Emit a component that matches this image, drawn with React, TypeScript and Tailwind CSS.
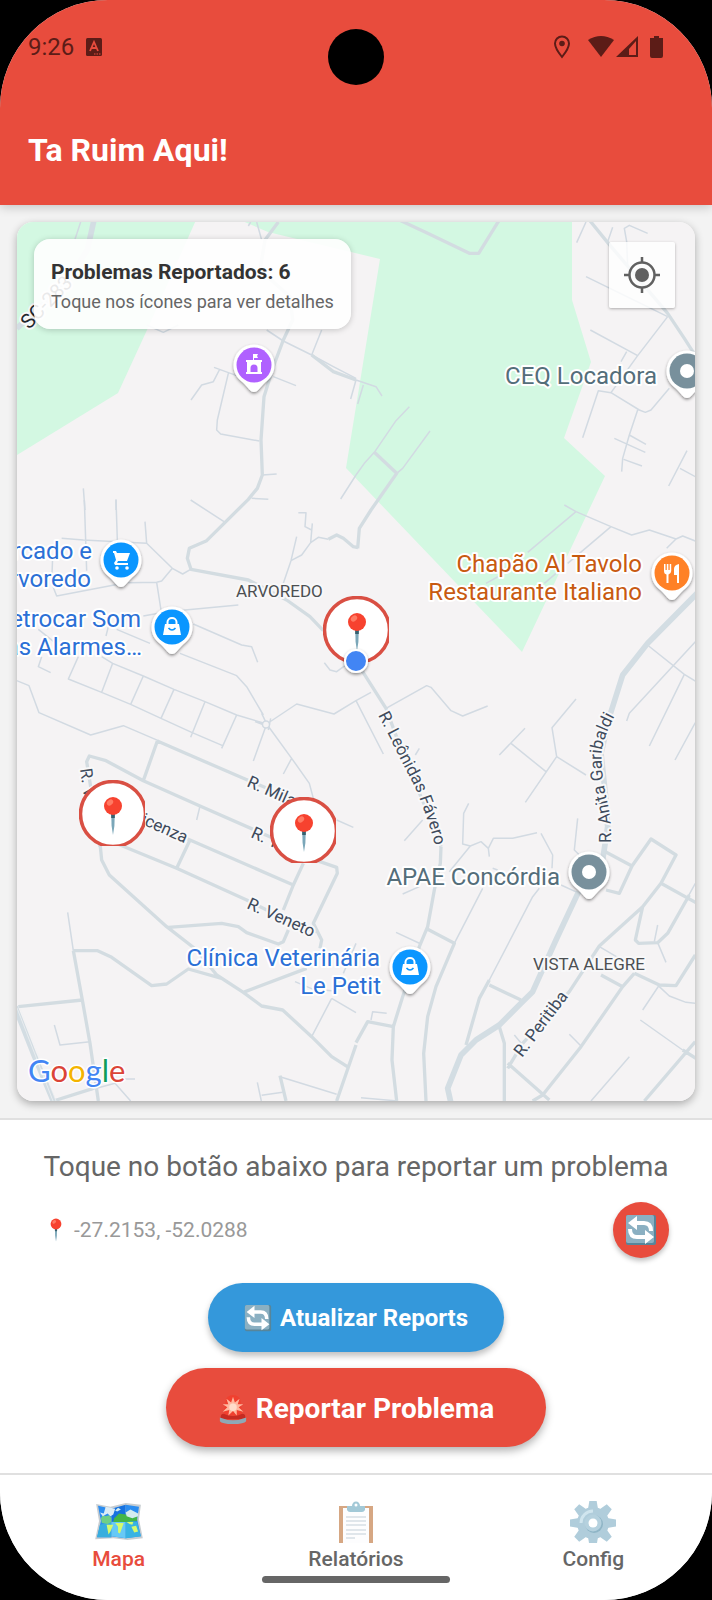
import type { ReactNode } from 'react';

type Tile = { x: number; y: number; minor: string; street: string; major?: string };

// Road geometry, split in tiles. Inside a tile 3 units are 1 map unit.
const tiles: Tile[] = [
  {
    x: 0,
    y: 210,
    minor:
      'M242 36L225 88M745 48L752 36M770 36L785 90M440 345L490 367L535 345M800 360L850 393L935 435L1000 470L1068 505M935 435L965 360M1068 510L1052 567M820 500L888 527M642 472L710 497M658 480L640 515L605 525L573 570M685 490L652 630L650 660L662 672L778 693M787 795L830 792M755 865L805 868M572 870L672 935M250 835L255 900M348 868V900M1022 867L1068 795',
    street: 'M835 36L795 90L780 180L870 260L878 330L850 390L820 470L792 560L783 690L787 795L772 835L745 868L620 992L568 1015L562 1045L573 1078L745 1110L860 1170L930 1220L970 1262M935 435L1000 485L1068 510',
    major: 'M282 30L262 120L190 230L50 355',
  },
  {
    x: 356,
    y: 210,
    minor:
      'M0 510L60 530L78 558M22 525L5 582M160 590L120 632L55 727L25 760L0 795M222 663L140 775L122 790M690 200L935 320M703 360L845 437M812 425L795 455M935 320L845 437L765 548M680 683L727 542L765 548L850 600L868 607L885 600L940 535M845 600L820 675L800 745L797 785M820 675L870 703M775 685L868 727M803 748L858 768M993 722L938 828M972 775L1018 800M690 36L662 98M770 52L755 95M875 70L820 46L805 55L812 95L815 170',
    street: 'M130 30L215 70L340 130H368L428 33M55 727L122 790L45 900L10 955L5 1015M700 30L757 100L935 310L985 385L1020 440',
  },
  {
    x: 0,
    y: 500,
    minor:
      'M253 0L260 212M348 0L352 120M185 115L250 120L440 130M435 65L440 130L517 205L548 222L572 208M517 205L485 243L470 247L385 248M158 170L155 250L170 288L370 250M470 247L483 330M430 348L500 335L715 315M895 38H918L915 80L935 90M937 70L932 128L905 165L873 182M890 110L873 182L850 250M932 128L955 112L985 118M350 388L450 430M540 460L710 527L740 560L790 645M580 372L725 435L755 440L773 487M115 388L165 428M325 380L318 408M125 470L115 500L152 518M235 470L205 537L305 577L392 613L483 655L575 697L668 737M305 470L338 490L430 528L522 568L615 605L710 645L800 672M338 490L305 577M430 528L392 613M522 568L483 655M615 605L572 712M710 645L665 745M50 542L87 557L117 638L272 705L370 677L475 722M800 672L890 612L1002 642L1068 602L1113 577M785 640L800 672L760 783M765 665L800 678M812 655L805 690M800 672L875 775L928 850L940 895M875 775L850 822M973 488L990 510L1010 515L1035 497',
    street: 'M985 118L1010 105L1030 115L1060 140L1074 143',
  },
  {
    x: 356,
    y: 500,
    minor:
      'M625 15L660 35L765 80L827 105L880 90L960 117L980 108L1018 123M960 117L932 145M660 35L515 157M765 80L635 190M435 225L390 250M600 220L565 250M878 438L985 523L1018 543M1018 425L820 640L812 663M985 523L880 738M1018 668L957 780M0 602L82 762M90 625L212 557L225 562L285 632L320 648L395 618M507 685L430 765M465 730L570 815M660 597L588 683L602 770L508 907M602 770L690 825M190 745L178 765',
    street: 'M20 515L90 625L140 760L235 985L255 1040',
    major: 'M1025 278L875 430L800 525L762 645L735 760L750 900L755 980L740 1080',
  },
  {
    x: 0,
    y: 740,
    minor:
      'M600 198L590 240M203 517L220 632M163 855L180 915L270 905M345 1030L392 1083M375 1017H405M270 1050L345 1030M1010 240L1060 262M885 725L940 748L995 752M995 775L935 890M995 775L1068 818M772 1027L784 1083M785 1066L848 1057M840 1010L1010 1063M1030 700L1068 610',
    street:
      'M300 320L272 140L260 65L268 48L318 62L430 122L600 198L820 295L960 365L1010 382L1012 400L940 550L965 600L960 625M472 3L430 122M472 3L730 115L850 165M400 225L570 300L880 435M570 300L530 385M910 370L880 435L850 510M865 570L850 605L835 612L740 578L715 560L665 550L505 562M300 290L530 385L740 480L860 540L950 575M300 310L305 360L328 405L500 560L590 630L650 705L730 757L785 798L848 810L935 890L995 950L1042 980M730 757L920 685M220 632L247 780L270 910L295 1083M220 632H293L335 652L455 737L500 732L565 687L665 715M55 800L247 780M160 1083L280 1045M840 1007L858 1083M1068 915L1010 1083',
    major: 'M45 800L100 940L160 1083',
  },
  {
    x: 356,
    y: 740,
    minor:
      'M120 577L195 612M380 445L295 610M410 385L425 390M45 840L50 815L92 820M15 1073L125 1083M140 462L190 440M145 302L200 240M338 190L323 220L320 312L343 318L375 305L397 325L412 295H470L543 278M397 325L400 350M343 318L280 395M555 280L590 345L588 385M665 235L655 330L670 345M550 445L530 470L400 720M615 435L670 460M730 620L790 655M905 555L895 605M905 608L930 667M910 735L860 810M910 740L940 768L990 787L1018 790M640 883L675 918M820 950L705 1083M853 840L980 930M475 885L500 915M1018 430L985 490',
    street:
      'M255 320L253 370L235 450L215 560L190 620L140 770L112 860L108 960L122 1083M215 568L295 610L240 740L215 830L203 940L210 1083M0 908L35 845L112 860M400 720L370 775L330 915M400 735L495 780M430 860L445 910V1083M748 335L828 378M750 450L790 460L828 378L885 297L960 345L915 430L860 500L730 618L640 755L500 910L455 985M915 430L1020 488M860 500L838 600L848 610L905 608L935 580L1000 465M735 705L800 740M835 700L800 740L675 920L560 1065L530 1083M835 700L910 735L960 737L1018 645M455 970L580 1080M980 930L1020 955M1018 905L865 1083',
    major: 'M668 455L600 600L530 755L495 790L430 855L360 900L315 945L275 1045L285 1090',
  },
];

const pinShape = 'M0 27C-4 27-6 22-11 17.500C-17 13-20.500 8-20.500 0A20.500 20.500 0 0 1 20.500 0C20.500 8 17 13 11 17.500C6 22 4 27 0 27Z';

function Pin({ x, y, color, children }: { x: number; y: number; color: string; children: ReactNode }) {
  return (
    <g transform={`translate(${x} ${y})`} fill="#fff">
      <path d={pinShape} filter="url(#pin-shadow)" />
      <circle r="17.500" fill={color} />
      {children}
    </g>
  );
}

function BagGlyph() {
  return (
    <>
      <path d="M-7 -3H7L9 8H-9Z" />
      <path d="M-4.500 -2V-5A4.500 4 0 0 1 4.500 -5V-2" fill="none" stroke="#fff" strokeWidth="2" />
      <path d="M-3.500 1Q0 5 3.500 1" fill="none" stroke="#0a96ff" strokeWidth="1.600" />
    </>
  );
}

function PushpinShape() {
  return (
    <>
      <path d="M-1.800 7H1.800L1.400 20L0 29L-1.400 20Z" fill="#7ba7b9" />
      <path d="M-1.800 7H1.800V12H-1.800Z" fill="#37606e" />
      <circle r="9" fill="#f7422f" />
      <ellipse cx="-3" cy="-3.500" rx="3.500" ry="2.600" fill="#ff7a63" transform="rotate(-40 -3 -3.500)" />
    </>
  );
}

function ReportMarker({ x, y }: { x: number; y: number }) {
  return (
    <g transform={`translate(${x} ${y})`}>
      <g clipPath="url(#marker-box)">
        <circle cx="34" cy="34" r="32.500" fill="#fff" stroke="#d94f43" strokeWidth="3.500" />
      </g>
      <g transform="translate(34 26)">
        <PushpinShape />
      </g>
    </g>
  );
}

function CityMap() {
  return (
    <svg
      viewBox="17 222 678 879"
      preserveAspectRatio="xMidYMid slice"
      className="block h-full w-full font-[Roboto,sans-serif]"
      role="img"
      aria-label="Mapa"
    >
      <defs>
        <filter id="pin-shadow" x="-30%" y="-30%" width="160%" height="170%">
          <feDropShadow dx="0" dy="1.500" stdDeviation="1.500" floodColor="#000" floodOpacity="0.45" />
        </filter>
        <clipPath id="marker-box">
          <rect width="66" height="66" />
        </clipPath>
        <path id="leonidas" d="M378 715L390 738C400 760 411 778 418 794C424 810 432 832 438 856" />
        <path id="anita" d="M611 843Q612 818 606 796Q600 766 602 750Q604 735 618 710" />
      </defs>

      <rect x="0" y="200" width="712" height="920" fill="#f5f3f4" />
      <g fill="#d3f8e2">
        <path d="M17 220H196L147 330L118 393L17 455Z" />
        <path d="M240 220H572V300L591 362L564 438L605 476L522 652L346 468L380 259L268 232Z" />
      </g>

      <g fill="none" strokeLinejoin="round">
        {tiles.map((tile) => (
          <g key={`${tile.x}-${tile.y}`} transform={`translate(${tile.x} ${tile.y}) scale(${1 / 3})`}>
            <path d={tile.minor} stroke="#d2dae2" strokeWidth="4.500" />
            <path d={tile.street} stroke="#d3dce1" strokeWidth="10" />
            {tile.major && <path d={tile.major} stroke="#d3dde3" strokeWidth="17" />}
          </g>
        ))}
      </g>
      <circle cx="266" cy="724.500" r="3.500" fill="#f5f3f4" stroke="#d2dae2" strokeWidth="1.500" />
      <path d="M17 1008L53 1101M20 1008L56 1101" fill="none" stroke="#f0f2f3" strokeWidth="0.700" />

      <g fill="#3f4b5c" stroke="#f8f8f9" strokeWidth="4" strokeLinejoin="round" paintOrder="stroke" fontSize="17">
        <text transform="translate(29 330) rotate(-46)" fill="#20262c" fontSize="20">SC-283</text>
        <text transform="translate(246 786) rotate(24)">R. Milano</text>
        <text transform="translate(80 769) rotate(82)">R. V</text>
        <text transform="translate(130 819) rotate(24)">Vicenza</text>
        <text transform="translate(250 837) rotate(24)">R. Torino</text>
        <text transform="translate(246 908) rotate(24)">R. Veneto</text>
        <text transform="translate(522 1058) rotate(-53)">R. Peritiba</text>
        <text><textPath href="#leonidas">R. Leônidas Fávero</textPath></text>
        <text><textPath href="#anita">R. Anita Garibaldi</textPath></text>
        <g fill="#4c4f52">
          <text x="236" y="597">ARVOREDO</text>
          <text x="533" y="970">VISTA ALEGRE</text>
        </g>
      </g>

      <g fontSize="24" textAnchor="end" stroke="#fff" strokeWidth="4" strokeLinejoin="round" paintOrder="stroke">
        <g fill="#546e7a">
          <text x="657" y="384">CEQ Locadora</text>
          <text x="560" y="885">APAE Concórdia</text>
        </g>
        <g fill="#c85a11">
          <text x="642" y="572">Chapão Al Tavolo</text>
          <text x="642" y="600">Restaurante Italiano</text>
        </g>
        <g fill="#2b70d6">
          <text x="92" y="559">rcado e</text>
          <text x="91" y="587">rvoredo</text>
          <text x="141" y="627">etrocar Som</text>
          <text x="142" y="655">as Alarmes…</text>
          <text x="380" y="966">Clínica Veterinária</text>
          <text x="381" y="994">Le Petit</text>
        </g>
      </g>

      <Pin x={254} y={365} color="#b061ff">
        <path d="M-8 -5H8V-3H7V7H8V9H-8V7H-7V-3H-8ZM-3.500 7H3.500V3A3.500 3.500 0 0 0 -3.500 3Z" fillRule="evenodd" />
        <path d="M-1 -11H4L3 -9L4 -7H0V-5H-1Z" />
      </Pin>
      <Pin x={121} y={560} color="#0a96ff">
        <path d="M-8 -9H-5L-4 -7H9L6 1H-3L-4 3H7V5H-6L-7 3L-5 0L-7 -7H-8Z" />
        <circle cx="-4" cy="8" r="1.800" />
        <circle cx="6" cy="8" r="1.800" />
      </Pin>
      <Pin x={172} y={627} color="#0a96ff"><BagGlyph /></Pin>
      <Pin x={687} y={371} color="#78909c"><circle r="7" /></Pin>
      <Pin x={672} y={573} color="#ff8126">
        <path d="M-8 -9H-6.500V-3H-5.200V-9H-3.600V-3H-2.300V-9H-0.800V-2Q-1 1-3.500 1.500V10H-5.500V1.500Q-8 1-8 -2Z" />
        <path d="M7 -9V10H5V2H2V-4Q2 -8 7 -9Z" />
      </Pin>
      <Pin x={589} y={872} color="#78909c"><circle r="7" /></Pin>
      <Pin x={410} y={967} color="#0a96ff"><BagGlyph /></Pin>

      <ReportMarker x={79} y={780} />
      <ReportMarker x={270} y={797} />
      <ReportMarker x={323} y={596} />
      <circle cx="356" cy="661" r="11" fill="#4285f4" stroke="#fff" strokeWidth="2" filter="url(#pin-shadow)" />

      <text x="28" y="1082" fontSize="31" stroke="#fff" strokeWidth="3" paintOrder="stroke" className="font-[Lato,sans-serif]">
        <tspan fill="#4285f4">G</tspan>
        <tspan fill="#db4437">o</tspan>
        <tspan fill="#f4b400">o</tspan>
        <tspan fill="#4285f4">g</tspan>
        <tspan fill="#0f9d58">l</tspan>
        <tspan fill="#db4437">e</tspan>
      </text>
    </svg>
  );
}

function PushpinIcon() {
  return (
    <svg viewBox="-12 -10 24 40" className="h-6 w-4" aria-hidden="true">
      <PushpinShape />
    </svg>
  );
}

function RefreshIcon({ className }: { className: string }) {
  return (
    <svg viewBox="0 0 32 32" className={className} aria-hidden="true">
      <rect x="1" y="1" width="30" height="30" rx="2" fill="#57859a" />
      <rect x="1" y="1" width="28" height="28" rx="2" fill="#8bb0c2" />
      <g fill="none" stroke="#fff" strokeWidth="4">
        <path d="M9 9H19Q26 9 26 17" />
        <path d="M22 23H12Q5 23 5 15" />
      </g>
      <path d="M3 9L12 2V16ZM29 23L20 16V30Z" fill="#fff" />
    </svg>
  );
}

function SirenIcon() {
  return (
    <svg viewBox="0 0 32 32" className="h-[30px] w-[30px]" aria-hidden="true">
      <path d="M6 23L8 8Q9 1 16 1T24 8L26 23Z" fill="#f0402f" />
      <path d="M3 24Q3 21 6 21Q16 26 26 21Q29 21 29 24L30 27H2Z" fill="#c62b22" />
      <path d="M2 25Q16 31 30 25V29Q28 32 16 32T2 29Z" fill="#8ea9b6" />
      <path d="M16 3L18 9L23 5L21 11L27 11L22 14L27 19L20 17L20 23L16 18L11 23L12 17L5 19L10 14L5 11L11 11L9 5L14 9Z" fill="#ffb8a0" />
      <circle cx="16" cy="14" r="4" fill="#ffdcca" />
    </svg>
  );
}

function MapIcon() {
  return (
    <svg viewBox="0 0 52 42" className="h-10 w-[50px]" aria-hidden="true">
      <path d="M2 2L17 5L33 1L49 3L47 18L51 38L35 40L20 38L1 39L5 20Z" fill="#c7cdd1" />
      <path d="M4 4L18 7V37L3 37L7 20Z" fill="#2b8df0" />
      <path d="M18 7L33 3V38L18 36Z" fill="#1672e0" />
      <path d="M33 3L47 5L45 18L49 36L33 38Z" fill="#2b8df0" />
      <path d="M6 24L18 21V37L3 37Z" fill="#38aede" />
      <path d="M18 21L33 19V38L18 36Z" fill="#66c9f6" />
      <path d="M33 19L45 21L49 36L33 38Z" fill="#38b3e3" />
      <path d="M7 17L9 14L12 15L16 14L18 17V21L14 23L8 22Z" fill="#6fcf86" />
      <path d="M6 11L10 12L12 5L22 7L20 13L17 15L14 12L9 15Z" fill="#dcecf6" />
      <path d="M21 17L26 12L33 13L45 15V20L33 21L20 21Z" fill="#43b649" />
      <path d="M22 9L25 6L28 8L24 10ZM33 11L38 8L46 12V15L40 17L34 15Z" fill="#d5ecef" />
      <path d="M13 24L20 24L17 31L15 34ZM22 22L31 22L27 33L25 32L25 26ZM39 26L44 25L46 31L42 32ZM34 21L41 21L40 24L37 23Z" fill="#d5fa6c" />
    </svg>
  );
}

function ClipboardIcon() {
  return (
    <svg viewBox="0 0 36 42" className="h-[42px] w-9" aria-hidden="true">
      <path d="M1 5H35V42H1Z" fill="#d6a783" />
      <path d="M5 7H31V42H5Z" fill="#fdfdfe" />
      <path d="M8 16H28M8 20H28M8 24H28M8 29H28M8 33H28M8 37H17" stroke="#c3cfd8" strokeWidth="1" />
      <path d="M9 5H14A4 4.500 0 0 1 22 5H27V9Q26 11 24 11H12Q10 11 9 9Z" fill="#a3c9d7" />
      <circle cx="18" cy="4" r="1.500" fill="#fff" />
    </svg>
  );
}

function GearIcon() {
  return (
    <svg viewBox="-24 -22 48 42" className="h-[42px] w-12" aria-hidden="true">
      <g fill="#b0cddb">
        <circle r="16" />
        {[0, 45, 90, 135, 180, 225, 270, 315].map((angle) => (
          <path key={angle} d="M-5 -14L-3.500 -23H3.500L5 -14Z" transform={`rotate(${angle})`} />
        ))}
      </g>
      <path d="M-12 0A12 12 0 0 1 0 -12" fill="none" stroke="#d0e5ee" strokeWidth="3" />
      <circle cx="1" cy="1" r="9" fill="#8fb5c6" />
      <circle r="8.500" fill="#b5d1de" />
      <circle r="4.500" fill="#fff" />
    </svg>
  );
}

function StatusBar() {
  return (
    <div className="flex h-[94px] items-center justify-between pl-7 pr-12 text-[#5c1c17]">
      <div className="flex items-center gap-3">
        <span className="text-[24px] leading-8">9:26</span>
        <svg viewBox="0 0 16 18" className="h-[18px] w-4" aria-hidden="true">
          <rect width="16" height="18" rx="1.500" fill="currentColor" />
          <path d="M4 13L8 4L12 13M5.500 10H10.500" fill="none" stroke="#e84c3d" strokeWidth="1.800" />
          <path d="M8 16H15" stroke="#e84c3d" strokeDasharray="1.500 1" />
        </svg>
      </div>
      <div className="flex items-center">
        <svg viewBox="0 0 110 24" className="h-6 w-[110px]" fill="currentColor" aria-hidden="true">
          <path d="M8 22C4 17 1 13 1 8.500A7 7 0 0 1 15 8.500C15 13 12 17 8 22Z" fill="none" stroke="currentColor" strokeWidth="2" />
          <circle cx="8" cy="8.500" r="2.800" />
          <path d="M34 5Q47 -3 60 5L47 22Z" />
          <path d="M84 1V22H62ZM82 6L75 14V20H82Z" fillRule="evenodd" />
          <path d="M96 3H100V1H105V3H109V21Q109 23 107 23H98Q96 23 96 21Z" />
        </svg>
      </div>
    </div>
  );
}

const tabs = [
  { label: 'Mapa', icon: <MapIcon />, active: true },
  { label: 'Relatórios', icon: <ClipboardIcon />, active: false },
  { label: 'Config', icon: <GearIcon />, active: false },
];

export default function App() {
  return (
    <div className="w-full bg-black font-[Roboto,sans-serif]">
      <div className="relative overflow-hidden rounded-[108px] bg-[#f3f3f3]">
        <header className="relative z-10 bg-[#e84c3d] shadow-[0_2px_10px_rgba(0,0,0,0.2)]">
          <StatusBar />
          <h1 className="px-7 pb-[35px] pt-9 text-[32px] font-bold leading-10 text-white">Ta Ruim Aqui!</h1>
          <div className="absolute left-1/2 top-[29px] h-14 w-14 -translate-x-1/2 rounded-full bg-black" />
        </header>

        <main>
          <div className="p-[17px]">
            <section className="relative aspect-[678/879] overflow-hidden rounded-2xl shadow-[0_3px_8px_rgba(0,0,0,0.3)]">
              <CityMap />
              <div className="absolute left-[17px] top-[17px] rounded-2xl bg-white/90 p-[17px] shadow-[0_1px_6px_rgba(0,0,0,0.2)]">
                <h2 className="text-[21px] font-bold leading-8 text-[#333]">Problemas Reportados: 6</h2>
                <p className="mt-1 text-[18px] leading-5 text-[#666]">Toque nos ícones para ver detalhes</p>
              </div>
              <button
                type="button"
                aria-label="Minha localização"
                className="absolute right-5 top-5 flex h-[66px] w-[66px] items-center justify-center rounded-xs bg-white/80 shadow-[0_1px_3px_rgba(0,0,0,0.3)]"
              >
                <svg viewBox="0 0 36 36" className="h-9 w-9" aria-hidden="true">
                  <circle cx="18" cy="18" r="12.500" fill="none" stroke="#616161" strokeWidth="2.500" />
                  <circle cx="18" cy="18" r="7" fill="#616161" />
                  <path d="M18 0V6M18 30V36M0 18H6M30 18H36" stroke="#616161" strokeWidth="2.500" />
                </svg>
              </button>
            </section>
          </div>

          <section className="flex flex-col items-center border-t-2 border-[#e0e0e0] bg-white px-8 pb-[26px] pt-[29px]">
            <p className="text-center text-[28px] leading-9 text-[#666]">Toque no botão abaixo para reportar um problema</p>
            <div className="mt-[17px] flex w-full items-center justify-between px-[11px]">
              <p className="flex items-center gap-[10px] pl-[5px] text-[21px] leading-7 text-[#999]">
                <PushpinIcon />
                -27.2153, -52.0288
              </p>
              <button
                type="button"
                aria-label="Atualizar localização"
                className="flex h-14 w-14 items-center justify-center rounded-full bg-[#e84c3d] shadow-[0_3px_5px_rgba(0,0,0,0.25)]"
              >
                <RefreshIcon className="h-8 w-8" />
              </button>
            </div>
            <button
              type="button"
              className="mt-[25px] flex h-[69px] items-center gap-2 rounded-full bg-[#3498db] px-9 text-[24px] font-bold text-white shadow-[0_4px_6px_rgba(0,0,0,0.25)]"
            >
              <RefreshIcon className="h-7 w-7" />
              Atualizar Reports
            </button>
            <button
              type="button"
              className="mt-4 flex h-[79px] items-center gap-2 rounded-full bg-[#e84c3d] px-[52px] pt-[2px] text-[28px] font-bold text-white shadow-[0_4px_8px_rgba(0,0,0,0.3)]"
            >
              <SirenIcon />
              Reportar Problema
            </button>
          </section>
        </main>

        <nav className="grid grid-cols-3 border-t-2 border-[#e0e0e0] bg-white pb-[25px] pt-[26px]">
          {tabs.map((tab) => (
            <button
              key={tab.label}
              type="button"
              className={`flex flex-col items-center text-[21px] font-medium leading-8 ${tab.active ? 'text-[#e84c3d]' : 'text-[#666]'}`}
            >
              <span className="flex h-[42px] items-center">{tab.icon}</span>
              {tab.label}
            </button>
          ))}
        </nav>
        <div className="absolute bottom-[17px] left-1/2 h-[7px] w-[188px] -translate-x-1/2 rounded-full bg-[#666]" />
      </div>
    </div>
  );
}
